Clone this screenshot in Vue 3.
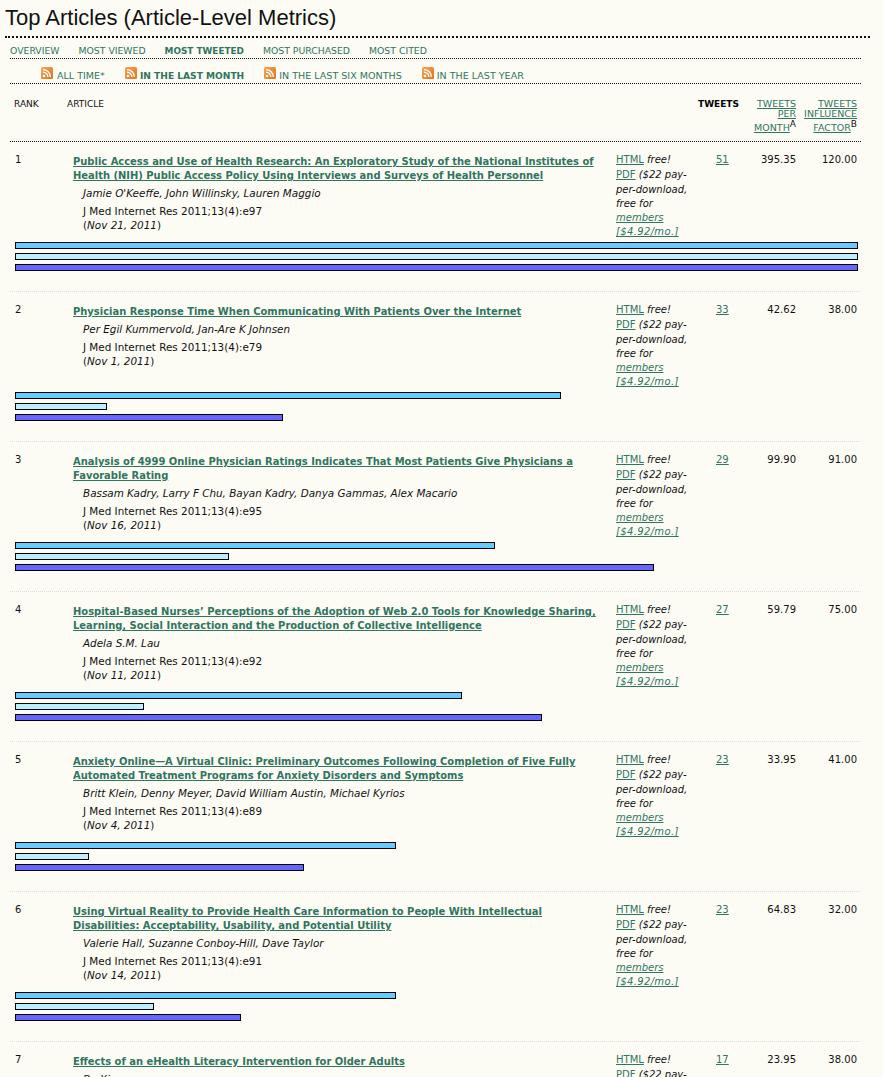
<script setup>
const navs = [
  { t: 'OVERVIEW' }, { t: 'MOST VIEWED' }, { t: 'MOST TWEETED', on: true }, { t: 'MOST PURCHASED' }, { t: 'MOST CITED' }
]
const times = [
  { t: 'ALL TIME*' }, { t: 'IN THE LAST MONTH', on: true }, { t: 'IN THE LAST SIX MONTHS' }, { t: 'IN THE LAST YEAR' }
]
const rows = [
  { n: 1, title: ['Public Access and Use of Health Research: An Exploratory Study of the National Institutes of', 'Health (NIH) Public Access Policy Using Interviews and Surveys of Health Personnel'], authors: "Jamie O'Keeffe, John Willinsky, Lauren Maggio", cite: 'e97', date: 'Nov 21, 2011', tw: 51, pm: '395.35', inf: '120.00', bars: [843, 843, 843] },
  { n: 2, title: ['Physician Response Time When Communicating With Patients Over the Internet'], authors: 'Per Egil Kummervold, Jan-Are K Johnsen', cite: 'e79', date: 'Nov 1, 2011', tw: 33, pm: '42.62', inf: '38.00', bars: [546, 92, 268] },
  { n: 3, title: ['Analysis of 4999 Online Physician Ratings Indicates That Most Patients Give Physicians a', 'Favorable Rating'], authors: 'Bassam Kadry, Larry F Chu, Bayan Kadry, Danya Gammas, Alex Macario', cite: 'e95', date: 'Nov 16, 2011', tw: 29, pm: '99.90', inf: '91.00', bars: [480, 214, 639] },
  { n: 4, title: ['Hospital-Based Nurses\u2019 Perceptions of the Adoption of Web 2.0 Tools for Knowledge Sharing,', 'Learning, Social Interaction and the Production of Collective Intelligence'], authors: 'Adela S.M. Lau', cite: 'e92', date: 'Nov 11, 2011', tw: 27, pm: '59.79', inf: '75.00', bars: [447, 129, 527] },
  { n: 5, title: ['Anxiety Online\u2014A Virtual Clinic: Preliminary Outcomes Following Completion of Five Fully', 'Automated Treatment Programs for Anxiety Disorders and Symptoms'], authors: 'Britt Klein, Denny Meyer, David William Austin, Michael Kyrios', cite: 'e89', date: 'Nov 4, 2011', tw: 23, pm: '33.95', inf: '41.00', bars: [381, 74, 289] },
  { n: 6, title: ['Using Virtual Reality to Provide Health Care Information to People With Intellectual', 'Disabilities: Acceptability, Usability, and Potential Utility'], authors: 'Valerie Hall, Suzanne Conboy-Hill, Dave Taylor', cite: 'e91', date: 'Nov 14, 2011', tw: 23, pm: '64.83', inf: '32.00', bars: [381, 139, 226] },
  { n: 7, title: ['Effects of an eHealth Literacy Intervention for Older Adults'], authors: 'Bo Xie', cite: 'e90', date: 'Nov 3, 2011', tw: 17, pm: '23.95', inf: '38.00', bars: [] }
]
const barClass = ['b1', 'b2', 'b3']
</script>

<template>
  <div class="page">
    <h1 class="title">Top Articles (Article-Level Metrics)</h1>
    <nav class="nav">
      <a v-for="x in navs" :key="x.t" :class="{ on: x.on }">{{ x.t }}</a>
    </nav>
    <nav class="nav2">
      <span v-for="x in times" :key="x.t" class="tm">
        <svg class="rss" viewBox="0 0 12 12" width="12" height="12">
          <defs>
            <linearGradient id="rssg" x1="0" y1="0" x2="1" y2="1">
              <stop offset="0" stop-color="#f8a552" />
              <stop offset="1" stop-color="#e6701c" />
            </linearGradient>
          </defs>
          <rect width="12" height="12" rx="1.5" fill="url(#rssg)" />
          <circle cx="3" cy="9" r="1.3" fill="#fff" />
          <path d="M2 5.2a4.8 4.8 0 0 1 4.8 4.8M2 2.6a7.4 7.4 0 0 1 7.4 7.4" fill="none" stroke="#fff" stroke-width="1.4" />
        </svg>
        <a :class="{ on: x.on }">{{ x.t }}</a>
      </span>
    </nav>
    <div class="head">
      <div class="h-rank">RANK</div>
      <div class="h-art">ARTICLE</div>
      <div class="h-tw">TWEETS</div>
      <div class="h-pm"><div><a>TWEETS</a></div><div><a>PER</a></div><div class="l3"><a>MONTH</a><sup>A</sup></div></div>
      <div class="h-inf"><div><a>TWEETS</a></div><div><a>INFLUENCE</a></div><div class="l3"><a>FACTOR</a><sup>B</sup></div></div>
    </div>
    <section v-for="r in rows" :key="r.n" class="row">
      <div class="cells">
        <div class="rank">{{ r.n }}</div>
        <div class="art">
          <div class="t"><template v-for="(l, i) in r.title" :key="i"><a>{{ l }}</a><br v-if="i < r.title.length - 1" /></template></div>
          <div class="au">{{ r.authors }}</div>
          <div class="ci">J Med Internet Res 2011;13(4):{{ r.cite }}<br />(<i>{{ r.date }}</i>)</div>
        </div>
        <div class="acc">
          <div class="gap"><a>HTML</a> <i>free!</i></div>
          <div class="gap"><a>PDF</a> <i>($22 pay-</i></div>
          <div><i>per-download,</i></div>
          <div><i>free for</i></div>
          <div><i><a>members</a></i></div>
          <div><i><a class="mo">[$4.92/mo.]</a></i></div>
        </div>
        <div class="tw"><a>{{ r.tw }}</a></div>
        <div class="pm">{{ r.pm }}</div>
        <div class="inf">{{ r.inf }}</div>
      </div>
      <div class="bars" v-if="r.bars.length">
        <div v-for="(w, i) in r.bars" :key="i" class="bar" :class="barClass[i]" :style="{ width: w + 'px' }"></div>
      </div>
    </section>
  </div>
</template>

<style>
html, body { background: #fcfcf5; }
body { overflow: hidden; }
</style>

<style scoped>
.page {
  width: 883px;
  height: 1077px;
  overflow: hidden;
  box-sizing: border-box;
  background: #fcfcf5;
  font-family: "DejaVu Sans", Verdana, sans-serif;
  font-size: 10px;
  line-height: 14px;
  color: #111;
}
a { color: #2f7560; text-decoration: underline; }
.title {
  margin: 0 13px 0 5px;
  height: 36px;
  font: 400 22px/36px "Liberation Sans", Arial, sans-serif;
  color: #111;
  border-bottom: 2px dotted #111;
}
.nav {
  margin: 0 22px 0 10px;
  height: 20px;
  border-bottom: 1px dotted #111;
  display: flex;
  align-items: baseline;
  gap: 19px;
  font-size: 9.3px;
  line-height: 25px;
  white-space: nowrap;
}
.nav a, .nav2 a { text-decoration: none; }
.nav a.on { font-weight: 700; font-size: 8.9px; }
.nav2 a.on { font-weight: 700; font-size: 9.1px; }
.nav2 {
  margin: 0 22px 0 10px;
  padding-left: 31px;
  height: 24px;
  border-bottom: 1px dotted #111;
  display: flex;
  align-items: baseline;
  gap: 20px;
  font-size: 9.55px;
  line-height: 33px;
  white-space: nowrap;
}
.tm { display: block; position: relative; padding-left: 15px; }
.tm:first-child { padding-left: 16px; }
.rss { position: absolute; left: 0; top: 8px; }
.head {
  margin: 0 22px 0 10px;
  height: 57px;
  border-bottom: 1px dotted #111;
  position: relative;
  font-size: 9.5px;
  line-height: 10px;
}
.h-rank, .h-art, .h-tw, .h-pm, .h-inf { position: absolute; top: 15px; }
.h-rank { left: 4px; font-size: 9px; }
.h-art { left: 57px; font-size: 9px; }
.h-tw { left: 688px; font-weight: 700; font-size: 9px; color: #000; }
.h-pm { right: 65px; text-align: right; }
.h-inf { right: 4px; text-align: right; }
.l3 { margin-top: 4px; }
sup { font-size: 9px; line-height: 0; vertical-align: 4px; color: #111; }
.row {
  margin: 0 22px 0 10px;
  padding-top: 10px;
  height: 139px;
  border-bottom: 1px dotted #ddd;
}
.cells {
  display: grid;
  grid-template-columns: 63px 543px 100px 40px 40px 61px;
  height: 90px;
}
.rank, .acc, .tw, .pm, .inf { padding-top: 1px; }
.rank { padding-left: 5px; }
.art { white-space: nowrap; }
.t { font-weight: 700; line-height: 14px; padding-top: 3px; font-size: 9.95px; }
.au { font-style: italic; padding-left: 10px; margin-top: 3px; font-size: 10.4px; }
.ci { padding-left: 10px; margin-top: 4px; font-size: 10.4px; }
.acc { white-space: nowrap; }
.gap { margin-bottom: 1px; }
.mo { letter-spacing: 0.35px; }
.pm, .inf { text-align: right; white-space: nowrap; }
.bars { padding-left: 5px; display: flex; flex-direction: column; gap: 4px; }
.bar { height: 7px; box-sizing: border-box; border: 1px solid #000; }
.b1 { background: #66ccff; }
.b2 { background: #bbeeff; }
.b3 { background: #6666ff; }
</style>
